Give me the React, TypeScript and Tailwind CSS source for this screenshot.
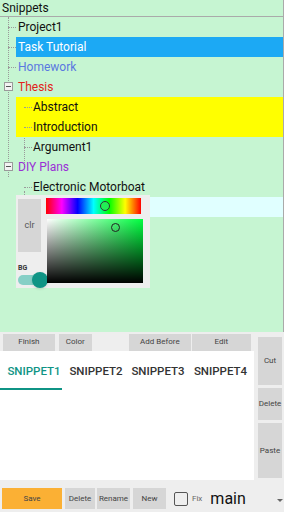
import React from 'react'

const font = { fontFamily: 'Roboto, "Noto Sans", sans-serif' }

type Row = {
  label: string
  depth: number
  color?: string
  bg?: string
  toggle?: boolean
}

const rows: Row[] = [
  { label: 'Project1', depth: 0 },
  { label: 'Task Tutorial', depth: 0, color: 'text-white', bg: 'bg-[#1ca9f4]' },
  { label: 'Homework', depth: 0, color: 'text-[#5a78e0]' },
  { label: 'Thesis', depth: 0, color: 'text-[#e3211b]', toggle: true },
  { label: 'Abstract', depth: 1, bg: 'bg-[#ffff00]' },
  { label: 'Introduction', depth: 1, bg: 'bg-[#ffff00]' },
  { label: 'Argument1', depth: 1 },
  { label: 'DIY Plans', depth: 0, color: 'text-[#9a2fd6]', toggle: true },
  { label: 'Electronic Motorboat', depth: 1 },
  { label: '', depth: 1, bg: 'bg-[#e0ffff]' },
]

function TreeRow({ row }: { row: Row }) {
  return (
    <div className="relative flex h-5 items-center">
      <div className={`ml-4 flex h-full flex-1 items-center ${row.bg ?? ''}`}>
        <span className={`text-[12px] leading-none ${row.depth === 1 ? 'pl-[17px]' : 'pl-[2px]'} ${row.color ?? 'text-[#111]'}`}>
          {row.label}
        </span>
      </div>
      {row.toggle ? (
        <div className="absolute left-[4px] top-[5px] flex h-[9px] w-[9px] items-center justify-center border border-[#9a9a9a] bg-[#f2f2f2]">
          <div className="h-px w-[5px] bg-[#555]" />
        </div>
      ) : (
        <div
          className={`absolute top-[10px] w-[8px] border-t border-dotted border-[#9a9a9a] ${
            row.depth === 0 ? 'left-[8px]' : 'left-[24px]'
          }`}
        />
      )}
    </div>
  )
}

function ColorPicker() {
  return (
    <div className="absolute left-[16px] top-[195px] flex h-[93px] w-[134px] gap-[5px] bg-[#eeeeee] py-[3px] pl-[2px]">
      <div className="flex w-[23px] flex-col">
        <div className="mt-[1px] flex h-[53px] items-center justify-center bg-[#d6d6d6] text-[9px] text-[#555]">clr</div>
        <div className="mt-[11px] text-[7px] font-bold text-[#333]">BG</div>
        <div className="relative mt-[2px] h-[10px] w-[26px] rounded-full bg-[#86cfc6]">
          <div className="absolute left-[14px] top-[-3px] h-4 w-4 rounded-full bg-[#0f9485] shadow" />
        </div>
      </div>
      <div className="flex flex-1 flex-col gap-[5px]">
        <div
          className="relative h-[16px] w-[95px]"
          style={{ background: 'linear-gradient(to right, #f00, #f0f, #00f, #0ff, #0f0, #ff0, #f00)' }}
        >
          <div className="absolute left-[54px] top-[3px] h-[10px] w-[10px] rounded-full border border-[#333] bg-[#22ee55]" />
        </div>
        <div
          className="relative ml-[1px] h-[64px] w-[96px]"
          style={{
            background:
              'linear-gradient(to top, #000, rgba(0,0,0,0)), linear-gradient(to right, #fff, #00ff40)',
          }}
        >
          <div className="absolute left-[64px] top-[4px] h-[9px] w-[9px] rounded-full border border-[#222]" />
        </div>
      </div>
    </div>
  )
}

function GrayBtn({ label, className }: { label: string; className: string }) {
  return (
    <div className={`flex items-center justify-center bg-[#d6d6d6] text-[8px] text-[#444] ${className}`}>{label}</div>
  )
}

export default function App() {
  return (
    <div className="flex h-[512px] w-[284px] flex-col overflow-hidden bg-[#eeeeee]" style={font}>
      <div className="relative flex h-[332px] flex-col border-r border-[#aaa] bg-[#c6f5d2]">
        <div className="flex h-[17px] items-center border-b border-[#aaa] pl-[2px] text-[12px] text-[#111]">Snippets</div>
        <div className="relative">
          <div className="absolute left-[8px] top-0 h-[160px] border-l border-dotted border-[#9a9a9a]" />
          <div className="absolute left-[24px] top-[80px] h-[70px] border-l border-dotted border-[#9a9a9a]" />
          <div className="absolute left-[24px] top-[174px] h-[10px] border-l border-dotted border-[#9a9a9a]" />
          {rows.map((r, i) => (
            <TreeRow key={i} row={r} />
          ))}
        </div>
        <ColorPicker />
      </div>

      <div className="flex h-[148px]">
        <div className="flex w-[254px] flex-col">
          <div className="flex h-[19px] items-center gap-[4px] px-[3px] pt-[1px]">
            <GrayBtn label="Finish" className="h-[17px] w-[53px]" />
            <GrayBtn label="Color" className="h-[17px] w-[34px]" />
            <div className="w-[30px]" />
            <GrayBtn label="Add Before" className="h-[17px] w-[63px]" />
            <GrayBtn label="Edit" className="-ml-[3px] h-[17px] w-[61px]" />
          </div>
          <div className="flex flex-1 flex-col bg-white">
            <div className="relative flex h-[39px] pl-[3px] text-[11.5px] font-medium">
              <div className="flex w-[62px] items-center justify-center pt-[2px] text-[#0f9485]">SNIPPET1</div>
              <div className="flex w-[62px] items-center justify-center pt-[2px] text-[#333]">SNIPPET2</div>
              <div className="flex w-[62px] items-center justify-center pt-[2px] text-[#333]">SNIPPET3</div>
              <div className="flex w-[63px] items-center justify-center pt-[2px] text-[#333]">SNIPPET4</div>
              <div className="absolute bottom-0 left-0 h-[2px] w-[62px] bg-[#0f9485]" />
            </div>
          </div>
        </div>
        <div className="flex flex-1 flex-col gap-[3px] pl-[4px] pr-[2px] pt-[5px]">
          <GrayBtn label="Cut" className="h-[48px]" />
          <GrayBtn label="Delete" className="h-[32px]" />
          <GrayBtn label="Paste" className="h-[55px]" />
        </div>
      </div>

      <div className="flex flex-1 items-center pl-[2px] pt-[5px]">
        <div className="flex h-[21px] w-[60px] items-center justify-center bg-[#fbb034] text-[8px] text-[#444]">Save</div>
        <GrayBtn label="Delete" className="ml-[3px] h-[21px] w-[30px]" />
        <GrayBtn label="Rename" className="ml-[2px] h-[21px] w-[33px]" />
        <GrayBtn label="New" className="ml-[3px] h-[21px] w-[33px]" />
        <div className="ml-[8px] h-[14px] w-[14px] rounded-[2px] border-[1.5px] border-[#555]" />
        <span className="ml-[4px] text-[8px] text-[#666]">Fix</span>
        <span className="ml-[8px] text-[16px] text-[#111]">main</span>
        <div className="ml-[31px] mt-[3px] h-0 w-0 border-x-[3px] border-t-[3px] border-x-transparent border-t-[#666]" />
      </div>
    </div>
  )
}
